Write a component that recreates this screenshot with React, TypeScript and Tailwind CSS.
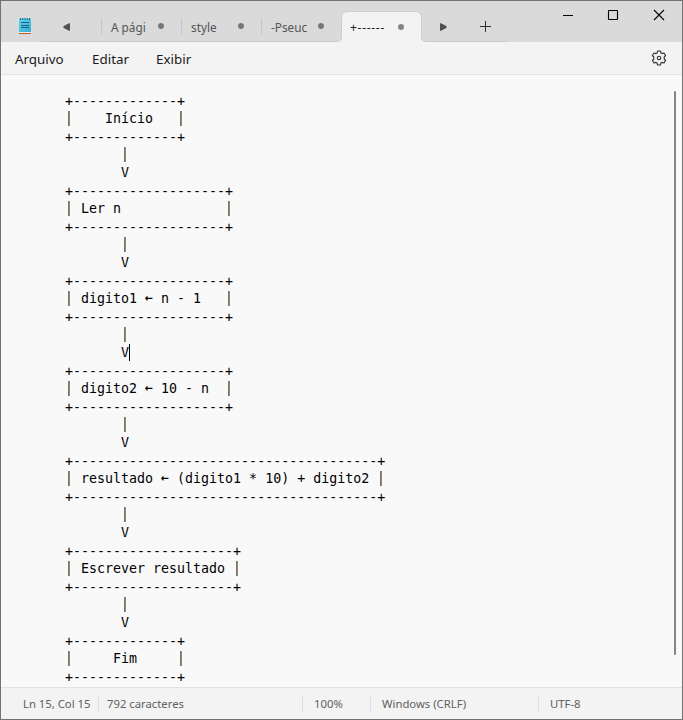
import React from 'react';

const lines = [
  '+-------------+',
  '|    Início   |',
  '+-------------+',
  '       |',
  '       V',
  '+-------------------+',
  '| Ler n             |',
  '+-------------------+',
  '       |',
  '       V',
  '+-------------------+',
  '| digito1 ← n - 1   |',
  '+-------------------+',
  '       |',
  '       V',
  '+-------------------+',
  '| digito2 ← 10 - n  |',
  '+-------------------+',
  '       |',
  '       V',
  '+--------------------------------------+',
  '| resultado ← (digito1 * 10) + digito2 |',
  '+--------------------------------------+',
  '       |',
  '       V',
  '+--------------------+',
  '| Escrever resultado |',
  '+--------------------+',
  '       |',
  '       V',
  '+-------------+',
  '|     Fim     |',
  '+-------------+',
];

const CARET_LINE = 14;

function Line({ text, caret }: { text: string; caret: boolean }) {
  const parts = text.split(/([|←])/);
  return (
    <div className={'flex h-[18px] leading-[18px] whitespace-pre ' + (text[0] === '+' ? 'pt-px' : '')}>
      {parts.map((p, i) =>
        p === '|' ? (
          <span key={i} className="mt-px h-[15px] w-2 bg-[linear-gradient(to_right,transparent_3px,#b5680c_3px,#b5680c_4px,#5596cf_4px,#5596cf_5px,transparent_5px)] text-center leading-[15px] text-transparent">|</span>
        ) : p === '←' ? (
          <span key={i} className="-mt-px w-2 text-center font-bold">←</span>
        ) : (
          <span key={i}>{p}</span>
        ),
      )}
      {caret && <span className="h-[17px] w-px bg-black" />}
    </div>
  );
}

function Tab({ label }: { label: string }) {
  return (
    <div className="flex h-4 w-20 items-center border-l border-[#c6c6c6] pl-[9px]">
      <span className="w-[35px] whitespace-nowrap pt-px text-[11.8px] leading-4 text-[#555]">{label}</span>
      <span className="ml-auto mr-[17px] size-1.5 rounded-full bg-[#777]" />
    </div>
  );
}

export default function App() {
  return (
    <div className="flex h-[720px] w-[683px] flex-col overflow-hidden border border-[#747274] bg-[#f9f9f9] font-['Noto_Sans',sans-serif]">
      <header className="flex h-[41px] shrink-0 bg-[#dadada]">
        <div className="flex w-10 shrink-0 pl-[17px] pt-4">
          <svg width="14" height="18" viewBox="0 0 14 18">
            <defs>
              <linearGradient id="note" x1="0" y1="0" x2="1" y2="1">
                <stop offset="0" stopColor="#63d3ef" />
                <stop offset="1" stopColor="#37add2" />
              </linearGradient>
            </defs>
            <path d="M1 15h12v1H1z" fill="#eee" />
            <path d="M1 16h12v1H1z" fill="#b45d20" />
            <rect x="1" y="1.5" width="12" height="13.5" rx=".8" fill="url(#note)" />
            <path d="M2.5 1v2M4.8 1v2M7 1v2M9.2 1v2M11.5 1v2" stroke="#176c8a" />
            <path d="M3 5.5h8M3 8.5h8M3 10.5h8" stroke="#12647f" />
          </svg>
        </div>
        <div className="flex w-[466px] shrink-0 items-end">
          <div className="flex h-full w-[60px] items-center justify-start border-b border-[#c8c8c8] pl-[22px] pt-3">
            <svg width="8" height="8" viewBox="0 0 8 8"><path d="M6.5 .5v7L.8 4.5v-1z" fill="#505050" stroke="#505050" strokeLinejoin="round" /></svg>
          </div>
          <div className="flex h-full w-60 items-start border-b border-[#c8c8c8] pt-[17px]">
            <Tab label="A pági" />
            <Tab label="style" />
            <Tab label="-Pseuc" />
          </div>
          <div className="relative -mx-1 h-[31px] w-[89px] shrink-0">
            <svg className="absolute inset-0" width="89" height="31" viewBox="0 0 89 31">
              <path d="M0 31V30.5Q4.5 30.5 4.5 26V7Q4.5 .5 11 .5H78Q84.5 .5 84.5 7V26Q84.5 30.5 89 30.5V31Z" fill="#f3f3f3" />
              <path d="M0 30.5Q4.5 30.5 4.5 26V7Q4.5 .5 11 .5H78Q84.5 .5 84.5 7V26Q84.5 30.5 89 30.5" fill="none" stroke="#cfcfcf" />
            </svg>
            <div className="relative flex h-8 items-center pl-[13px]">
              <span className="w-[35px] whitespace-nowrap pt-px text-[12px] leading-4 tracking-[0.7px] text-[#1b1b1b]">+------</span>
              <span className="-mt-px ml-[13px] size-1.5 rounded-full bg-[#858585]" />
            </div>
          </div>
          <div className="flex h-full flex-1 items-center border-b border-[#c8c8c8] pl-[17px] pt-3">
            <svg width="8" height="8" viewBox="0 0 8 8"><path d="M1.5 .5v7L7.2 4.5v-1z" fill="#505050" stroke="#505050" strokeLinejoin="round" /></svg>
            <svg className="-mt-px ml-[33px]" width="11" height="11" viewBox="0 0 11 11"><path d="M5.5 0v11M0 5.5h11" stroke="#303030" /></svg>
          </div>
        </div>
        <div className="flex flex-1 items-start pl-[55px] pt-2">
          <svg width="12" height="12" viewBox="0 0 12 12"><path d="M1 6.5h10" stroke="#000" /></svg>
          <svg className="ml-[33px]" width="12" height="12" viewBox="0 0 12 12"><rect x="1.5" y="1.5" width="9" height="9" rx=".6" fill="none" stroke="#000" strokeWidth="1.1" /></svg>
          <svg className="ml-[34px]" width="12" height="12" viewBox="0 0 12 12"><path d="M1 1l10 10M11 1L1 11" stroke="#000" strokeWidth="1.1" /></svg>
        </div>
      </header>
      <nav className="flex h-[33px] shrink-0 items-center border-b border-[#e5e5e5] bg-[#f3f3f3] pl-[14px] text-[13.4px] text-[#1b1b1b]">
        <span className="w-[77px] pt-[3px]">Arquivo</span>
        <span className="w-16 pt-[3px]">Editar</span>
        <span className="pt-[3px]">Exibir</span>
        <svg className="ml-auto mr-[15px]" width="16" height="16" viewBox="0 0 16 16" fill="none" stroke="#303030" strokeWidth="1.1" strokeLinejoin="round">
          <path d="M6.6 1h2.8l.5 2 1.1.6 2-.6 1.6 2.5L13.2 7v2l1.4 1.5L13 13l-2-.6-1.1.6-.5 2H6.6l-.5-2-1.1-.6-2 .6-1.6-2.5L2.8 9V7L1.4 5.5 3 3l2 .6L6.1 3z" />
          <circle cx="8" cy="8" r="1.7" />
        </svg>
      </nav>
      <main className="flex h-[612px] shrink-0 justify-between overflow-hidden">
        <div className="pl-16 pt-[17px] font-['DejaVu_Sans_Mono',monospace] text-[13.3px] text-black">
          {lines.map((l, i) => <Line key={i} text={l} caret={i === CARET_LINE} />)}
        </div>
        <div className="mr-[6px] mt-4 h-[564px] w-0.5 rounded-full bg-[#858585]" />
      </main>
      <footer className="flex flex-1 items-center border-t border-[#e2e2e2] bg-[#f3f3f3] text-[11.3px] text-[#606060]">
        <span className="h-4 w-[97px] pl-[22px] leading-4 whitespace-nowrap">Ln 15, Col 15</span>
        <span className="h-4 w-[204px] border-l border-[#dedede] pl-2 leading-4">792 caracteres</span>
        <span className="h-4 w-[68px] border-l border-[#dedede] pl-[11px] leading-4">100%</span>
        <span className="h-4 w-[168px] border-l border-[#dedede] pl-[11px] leading-4">Windows (CRLF)</span>
        <span className="h-4 border-l border-[#dedede] pl-[11px] leading-4">UTF-8</span>
      </footer>
    </div>
  );
}
